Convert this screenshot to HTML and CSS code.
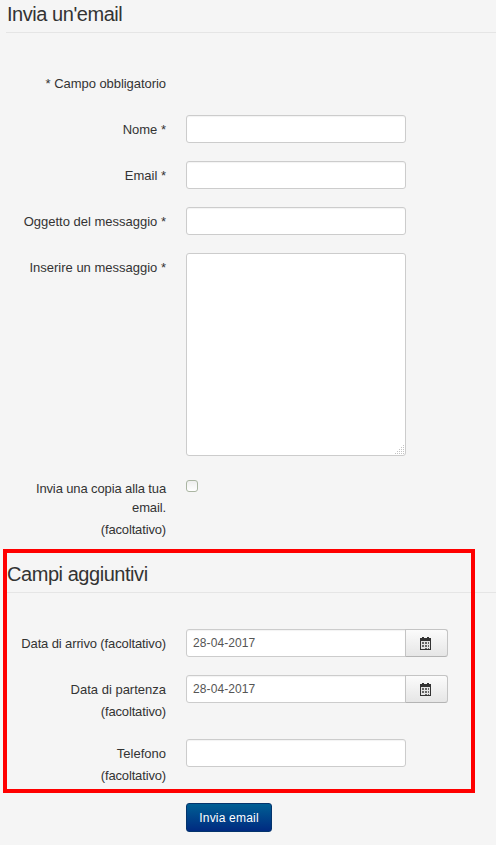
FILE: index.html
```html
<!DOCTYPE html>
<html lang="en">
<head>
  <meta charset="UTF-8">
  <title>Invia un'email</title>
  <link rel="stylesheet" href="styles.css">
</head>
<body>
  <div class="page">
    <h2 class="title">Invia un'email</h2>
    <div class="note">* Campo obbligatorio</div>

    <div class="row">
      <label class="lbl">Nome *</label>
      <input type="text" class="field">
    </div>
    <div class="row">
      <label class="lbl">Email *</label>
      <input type="text" class="field">
    </div>
    <div class="row">
      <label class="lbl">Oggetto del messaggio *</label>
      <input type="text" class="field">
    </div>
    <div class="row">
      <label class="lbl">Inserire un messaggio *</label>
      <div class="area">
        <svg class="grip" width="11" height="11" viewBox="0 0 11 11">
          <path d="M9 1h1v1H9zM7 3h1v1H7zM9 3h1v1H9zM5 5h1v1H5zM7 5h1v1H7zM9 5h1v1H9zM3 7h1v1H3zM5 7h1v1H5zM7 7h1v1H7zM9 7h1v1H9zM1 9h1v1H1zM3 9h1v1H3zM5 9h1v1H5zM7 9h1v1H7zM9 9h1v1H9z" fill="#c4c4c4"/>
        </svg>
      </div>
    </div>
    <div class="row">
      <label class="lbl lbl-snug">Invia una copia alla tua email.<span class="opt">(facoltativo)</span></label>
      <span class="check"></span>
    </div>

    <h2 class="title title-extra">Campi aggiuntivi</h2>

    <div class="row row-first">
      <label class="lbl lbl-snug">Data di arrivo (facoltativo)</label>
      <div class="date">
        <input type="text" class="field" value="28-04-2017">
        <button class="cal" type="button">
          <svg width="11" height="13" viewBox="0 0 11 13">
            <path d="M0 1h2V0h2v1h3V0h2v1h2v12H0z" fill="#333"/>
            <path d="M1 4h9v8H1z" fill="#e4e4e4"/>
            <path d="M2 5h2v2H2zM5 5h2v2H5zM8 5h1v2H8zM2 8h2v2H2zM5 8h2v2H5zM8 8h1v2H8zM5 11h2v1H5zM8 11h1v1H8z" fill="#666"/>
          </svg>
        </button>
      </div>
    </div>
    <div class="row">
      <label class="lbl">Data di partenza <span class="opt">(facoltativo)</span></label>
      <div class="date">
        <input type="text" class="field" value="28-04-2017">
        <button class="cal" type="button">
          <svg width="11" height="13" viewBox="0 0 11 13">
            <path d="M0 1h2V0h2v1h3V0h2v1h2v12H0z" fill="#333"/>
            <path d="M1 4h9v8H1z" fill="#e4e4e4"/>
            <path d="M2 5h2v2H2zM5 5h2v2H5zM8 5h1v2H8zM2 8h2v2H2zM5 8h2v2H5zM8 8h1v2H8zM5 11h2v1H5zM8 11h1v1H8z" fill="#666"/>
          </svg>
        </button>
      </div>
    </div>
    <div class="row">
      <label class="lbl">Telefono <span class="opt">(facoltativo)</span></label>
      <input type="text" class="field">
    </div>

    <div class="actions">
      <button class="send" type="button">Invia email</button>
    </div>

    <div class="redbox"></div>
  </div>
</body>
</html>
```

FILE: styles.css
```css
html, body {
  margin: 0;
  padding: 0;
}
body {
  background-color: #f5f5f5;
  color: #333;
  font-family: "Liberation Sans", Arial, sans-serif;
  font-size: 13px;
  line-height: 19px;
  height: 845px;
  overflow: hidden;
}
.page {
  position: relative;
  padding-left: 6px;
}
.title {
  margin: 0;
  padding: 0 0 0 1px;
  height: 32px;
  font-size: 20px;
  font-weight: normal;
  letter-spacing: -0.45px;
  line-height: 28px;
  color: #333;
  border-bottom: 1px solid #e5e5e5;
}
.title-extra {
  margin-top: 21px;
}
.note {
  width: 160px;
  height: 19px;
  margin-top: 41px;
  margin-bottom: 22px;
  text-align: right;
  letter-spacing: -0.05px;
}
.row {
  display: flex;
  align-items: flex-start;
  gap: 20px;
  margin-top: 18px;
}
.row-first {
  margin-top: 36px;
}
.lbl {
  width: 160px;
  flex: none;
  padding-top: 5px;
  text-align: right;
}
.lbl-snug {
  letter-spacing: -0.12px;
}
.opt {
  display: block;
  margin-top: 3px;
  letter-spacing: -0.15px;
}
.field {
  width: 220px;
  height: 28px;
  box-sizing: border-box;
  flex: none;
  margin: 0;
  padding: 4px 6px;
  background: #fff;
  border: 1px solid #ccc;
  border-radius: 3px;
  box-shadow: inset 0 1px 1px rgba(0, 0, 0, 0.05);
  font-family: inherit;
  font-size: 12px;
  letter-spacing: 0.1px;
  color: #555;
}
.area {
  position: relative;
  width: 220px;
  height: 203px;
  box-sizing: border-box;
  background: #fff;
  border: 1px solid #ccc;
  border-radius: 3px;
}
.grip {
  position: absolute;
  right: 0;
  bottom: 0;
}
.check {
  width: 12px;
  height: 12px;
  box-sizing: border-box;
  margin-top: 6px;
  background: linear-gradient(#eee, #fff);
  border: 1px solid #aab5a2;
  border-radius: 3px;
}
.date {
  display: flex;
}
.date .field {
  border-radius: 3px 0 0 3px;
}
.cal {
  width: 43px;
  height: 28px;
  margin: 0 0 0 -1px;
  padding: 0 3px 0 0;
  display: flex;
  align-items: center;
  justify-content: center;
  background: linear-gradient(#fbfbfb, #e6e6e6);
  border: 1px solid #c4c4c4;
  border-bottom-color: #b4b4b4;
  border-radius: 0 3px 3px 0;
}
.actions {
  margin-top: 18px;
  padding-left: 180px;
}
.send {
  display: block;
  width: 86px;
  height: 29px;
  padding: 0;
  font-family: inherit;
  font-size: 12px;
  letter-spacing: 0.2px;
  color: #fff;
  background: linear-gradient(#005f94, #002a80);
  border: 1px solid #04346c;
  border-radius: 3px;
}
.redbox {
  position: absolute;
  left: 3px;
  top: 549px;
  width: 472px;
  height: 244px;
  box-sizing: border-box;
  border: 4px solid #f00;
  pointer-events: none;
}
```
